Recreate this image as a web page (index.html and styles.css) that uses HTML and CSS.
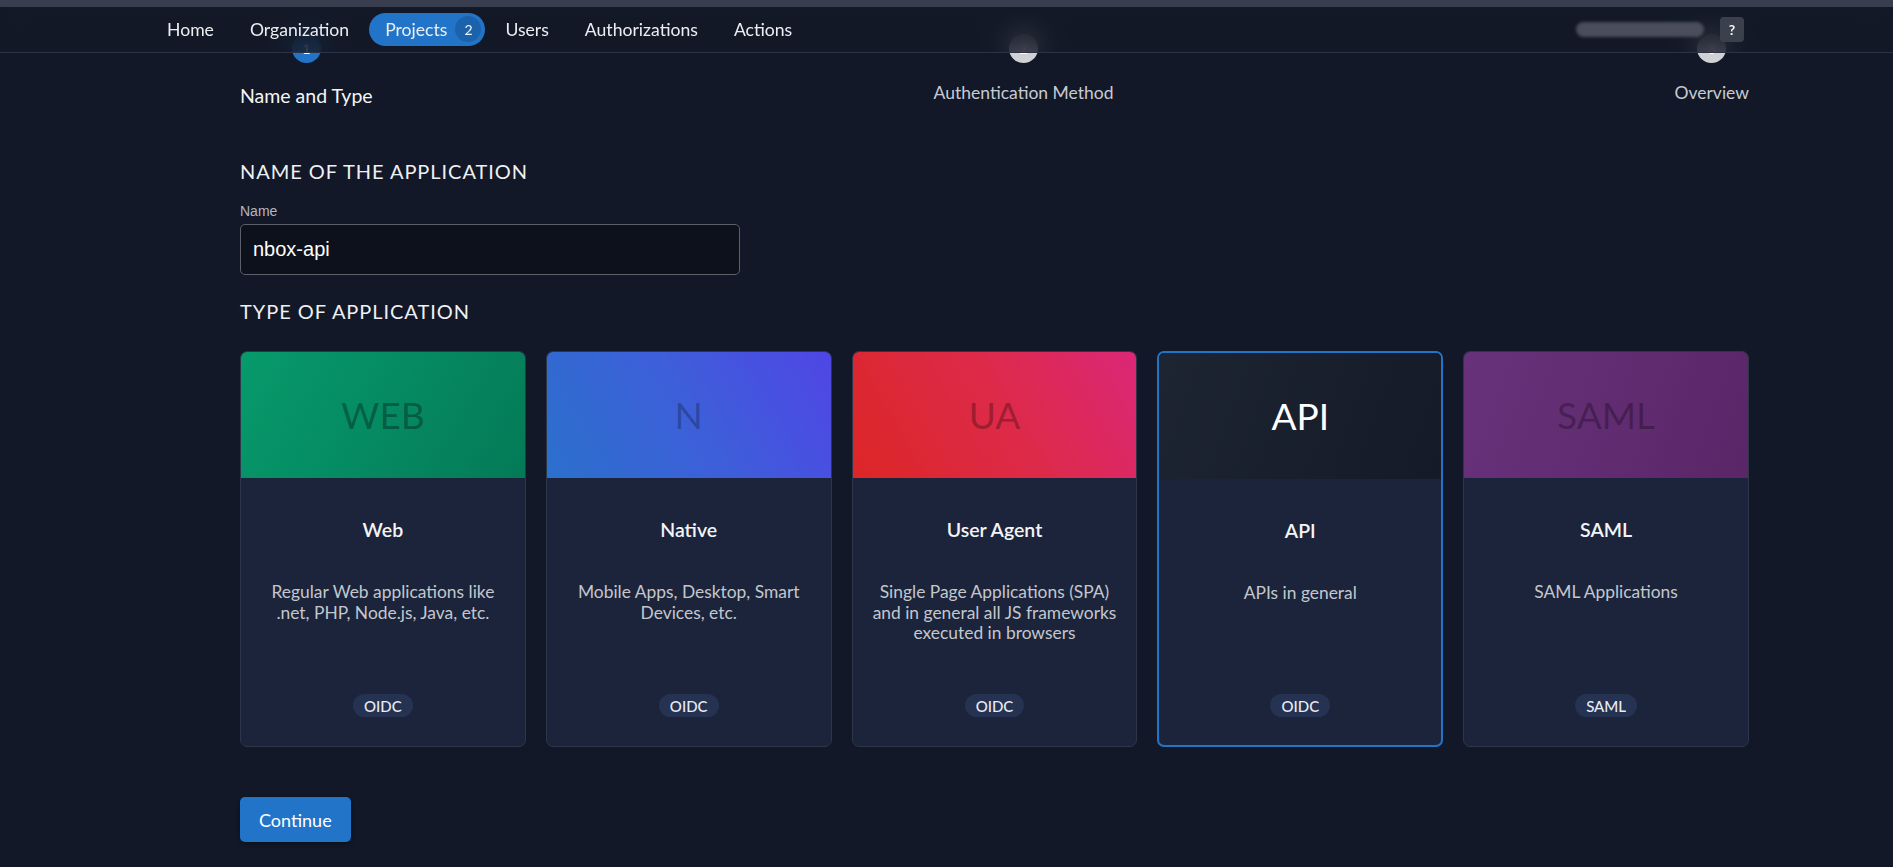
FILE: index.html
```html
<!DOCTYPE html>
<html lang="en">
<head>
<meta charset="utf-8">
<title>Create Application</title>
<link rel="stylesheet" href="styles.css">
</head>
<body>
<header class="topbar">
  <div class="strip"></div>
  <nav class="nav">
    <ul class="nav-links">
      <li class="nav-item">Home</li>
      <li class="nav-item">Organization</li>
      <li class="nav-item active">Projects <span class="count">2</span></li>
      <li class="nav-item">Users</li>
      <li class="nav-item">Authorizations</li>
      <li class="nav-item">Actions</li>
    </ul>
    <div class="nav-right">
      <span class="account"></span>
      <span class="help">?</span>
    </div>
  </nav>
</header>

<main class="page">
  <ol class="stepper">
    <li class="step current"><span class="dot">1</span><span class="step-label">Name and Type</span></li>
    <li class="step"><span class="dot">2</span><span class="step-label">Authentication Method</span></li>
    <li class="step"><span class="dot">3</span><span class="step-label">Overview</span></li>
  </ol>

  <h2 class="section-title first">NAME OF THE APPLICATION</h2>
  <label class="field-label" for="appname">Name</label>
  <input id="appname" class="text-input" type="text" value="nbox-api">

  <h2 class="section-title second">TYPE OF APPLICATION</h2>

  <div class="cards">
    <div class="card">
      <div class="card-head web">WEB</div>
      <div class="card-body">
        <div class="card-title">Web</div>
        <p class="card-desc">Regular Web applications like .net, PHP, Node.js, Java, etc.</p>
        <span class="chip">OIDC</span>
      </div>
    </div>
    <div class="card">
      <div class="card-head native">N</div>
      <div class="card-body">
        <div class="card-title">Native</div>
        <p class="card-desc">Mobile Apps, Desktop, Smart Devices, etc.</p>
        <span class="chip">OIDC</span>
      </div>
    </div>
    <div class="card">
      <div class="card-head ua">UA</div>
      <div class="card-body">
        <div class="card-title">User Agent</div>
        <p class="card-desc">Single Page Applications (SPA) and in general all JS frameworks executed in browsers</p>
        <span class="chip">OIDC</span>
      </div>
    </div>
    <div class="card selected">
      <div class="card-head api">API</div>
      <div class="card-body">
        <div class="card-title">API</div>
        <p class="card-desc">APIs in general</p>
        <span class="chip">OIDC</span>
      </div>
    </div>
    <div class="card">
      <div class="card-head saml">SAML</div>
      <div class="card-body">
        <div class="card-title">SAML</div>
        <p class="card-desc">SAML Applications</p>
        <span class="chip">SAML</span>
      </div>
    </div>
  </div>

  <button class="btn-primary" type="button">Continue</button>
</main>
</body>
</html>
```

FILE: styles.css
```css
* { box-sizing: border-box; }

html, body {
  margin: 0;
  padding: 0;
}

body {
  background: #121827;
  color: #e8eaef;
  font-family: Lato, "Open Sans", sans-serif;
  min-height: 867px;
}

/* ---------- top bar ---------- */
.topbar {
  position: fixed;
  top: 0;
  left: 0;
  right: 0;
  z-index: 10;
}

.strip {
  height: 7px;
  background: #393e4f;
}

.nav {
  height: 46px;
  display: flex;
  align-items: center;
  justify-content: space-between;
  padding: 0 149px 1px 151px;
  background: rgba(19, 25, 39, 0.72);
  border-bottom: 1px solid #2b3244;
  backdrop-filter: blur(14px);
  -webkit-backdrop-filter: blur(14px);
}

.nav-links {
  display: flex;
  align-items: center;
  gap: 4px;
  list-style: none;
  margin: 0;
  padding: 0;
}

.nav-item {
  display: flex;
  align-items: center;
  height: 33px;
  padding: 0 16px;
  font-size: 17.6px;
  color: #eceef2;
  border-radius: 17px;
  white-space: nowrap;
}

.nav-item.active {
  background: #2174c8;
  padding-right: 4px;
  gap: 8px;
}

.count {
  width: 26px;
  height: 26px;
  border-radius: 50%;
  background: #1c62ab;
  display: flex;
  align-items: center;
  justify-content: center;
  font-size: 14px;
  color: #f1f4f8;
}

.nav-right {
  display: flex;
  align-items: center;
  gap: 16px;
}

.account {
  width: 128px;
  height: 15px;
  border-radius: 8px;
  background: #4a4e5b;
  filter: blur(1.5px);
}

.help {
  width: 24px;
  height: 25px;
  border-radius: 4px;
  background: #3b404d;
  color: #f3f4f6;
  font-size: 14px;
  font-weight: 700;
  display: flex;
  align-items: center;
  justify-content: center;
}

/* ---------- page ---------- */
.page {
  padding: 34px 144px 40px 240px;
}

.stepper {
  list-style: none;
  margin: 0;
  padding: 0;
  display: flex;
  justify-content: space-between;
}

.step {
  display: flex;
  flex-direction: column;
  align-items: center;
  gap: 19px;
}

.dot {
  width: 29px;
  height: 29px;
  border-radius: 50%;
  background: #cfd1d5;
  color: #ffffff;
  font-size: 14px;
  font-weight: 700;
  display: flex;
  align-items: center;
  justify-content: center;
}

.step.current .dot {
  background: #2174c8;
}

.step-label {
  font-size: 17.5px;
  line-height: 22px;
  color: #c8cbd2;
}

.step.current .step-label {
  font-size: 19.5px;
  line-height: 27px;
  color: #f4f5f7;
}

.section-title {
  margin: 0;
  font-size: 20px;
  font-weight: 400;
  line-height: 24px;
  letter-spacing: 0.95px;
  color: #eef0f3;
}

.section-title.first {
  margin-top: 50px;
}

.section-title.second {
  margin-top: 24px;
}

.field-label {
  display: block;
  margin-top: 20px;
  font-family: "Liberation Sans", Arial, sans-serif;
  font-size: 14px;
  line-height: 16px;
  color: #b3b7c0;
}

.text-input {
  display: block;
  margin-top: 5px;
  width: 500px;
  height: 51px;
  padding: 0 12px;
  background: #0d111b;
  border: 1px solid #5b606b;
  border-radius: 5px;
  color: #ffffff;
  font-family: "Liberation Sans", Arial, sans-serif;
  font-size: 20px;
  outline: none;
}

/* ---------- cards ---------- */
.cards {
  margin-top: 28px;
  display: grid;
  grid-template-columns: repeat(5, 1fr);
  gap: 20px;
}

.card {
  height: 396px;
  display: flex;
  flex-direction: column;
  background: #1b243a;
  border: 1px solid #2d3548;
  border-radius: 7px;
  overflow: hidden;
}

.card.selected {
  border: 2px solid #2174c8;
}

.card-head {
  height: 126px;
  flex: none;
  display: flex;
  align-items: center;
  justify-content: center;
  padding-bottom: 2px;
  font-size: 37px;
  color: rgba(0, 0, 0, 0.32);
}

.card-head.web { background: linear-gradient(120deg, #079a6b 0%, #047a57 100%); }
.card-head.native { background: linear-gradient(60deg, #2b70cc 0%, #3d5fd9 50%, #4f46e5 100%); color: rgba(0, 0, 0, 0.26); }
.card-head.ua { background: linear-gradient(60deg, #dc2626 0%, #dd2a4a 55%, #db2777 100%); color: rgba(0, 0, 0, 0.3); }
.card-head.api { background: linear-gradient(110deg, #1d2432 0%, #141a28 100%); color: #ffffff; }
.card-head.saml { background: linear-gradient(110deg, #68327b 0%, #5a2667 100%); color: rgba(0, 0, 0, 0.28); }

.card-body {
  flex: 1;
  display: flex;
  flex-direction: column;
  align-items: center;
  text-align: center;
  padding: 39px 16px 29px;
}

.card.selected .card-body {
  padding-bottom: 28px;
}

.card-title {
  font-size: 19.5px;
  font-weight: 600;
  line-height: 26px;
  color: #f3f4f7;
}

.card-desc {
  margin: 39px 0 0;
  font-size: 17.4px;
  line-height: 20.5px;
  color: #c4c7ce;
}

.chip {
  margin-top: auto;
  height: 23px;
  padding: 0 11px;
  border-radius: 12px;
  background: #253252;
  color: #e9ecf2;
  font-size: 15px;
  font-weight: 500;
  display: flex;
  align-items: center;
}

/* ---------- button ---------- */
.btn-primary {
  margin-top: 50px;
  height: 45px;
  padding: 0 19px;
  border: none;
  border-radius: 5px;
  background: #2174c8;
  color: #ffffff;
  font-family: Lato, "Open Sans", sans-serif;
  font-size: 18px;
  box-shadow: 0 2px 4px rgba(0, 0, 0, 0.35);
  cursor: pointer;
}
```
